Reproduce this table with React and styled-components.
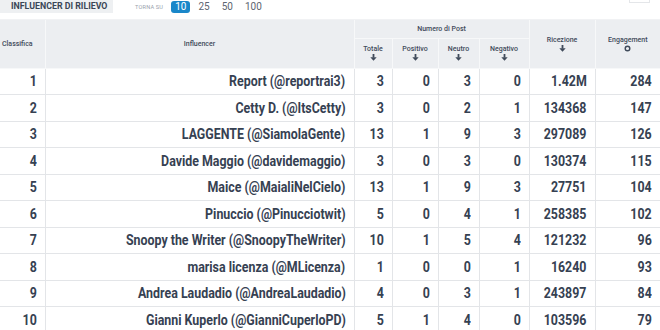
import React from 'react'
import styled, { createGlobalStyle } from 'styled-components'

const rows = [
  [1, 'Report (@reportrai3)', 3, 0, 3, 0, '1.42M', 284],
  [2, 'Cetty D. (@ItsCetty)', 3, 0, 2, 1, '134368', 147],
  [3, 'LAGGENTE (@SiamolaGente)', 13, 1, 9, 3, '297089', 126],
  [4, 'Davide Maggio (@davidemaggio)', 3, 0, 3, 0, '130374', 115],
  [5, 'Maice (@MaialiNelCielo)', 13, 1, 9, 3, '27751', 104],
  [6, 'Pinuccio (@Pinucciotwit)', 5, 0, 4, 1, '258385', 102],
  [7, 'Snoopy the Writer (@SnoopyTheWriter)', 10, 1, 5, 4, '121232', 96],
  [8, 'marisa licenza (@MLicenza)', 1, 0, 0, 1, '16240', 93],
  [9, 'Andrea Laudadio (@AndreaLaudadio)', 4, 0, 3, 1, '243897', 84],
  [10, 'Gianni Kuperlo (@GianniCuperloPD)', 5, 1, 4, 0, '103596', 79],
]

const Global = createGlobalStyle`
  body {
    margin: 0;
    background: #fff;
    font-family: Roboto, "Liberation Sans", sans-serif;
    overflow: hidden;
  }
`

const Arrow = () => (
  <svg width="7" height="7" viewBox="0 0 7 7">
    <rect x="2.6" y="0" width="1.8" height="3.6" fill="#3f4a5a" />
    <path d="M0.3 3.2 L6.7 3.2 L3.5 6.8 Z" fill="#3f4a5a" />
  </svg>
)

const Ring = () => (
  <svg width="7" height="7" viewBox="0 0 7 7">
    <circle cx="3.5" cy="3.5" r="2.3" fill="none" stroke="#3f4a5a" strokeWidth="1.4" />
  </svg>
)

const App = () => {
  return (
    <Page>
      <Global />
      <TopBar>
        <Title>INFLUENCER DI RILIEVO</Title>
        <Torna>TORNA SU</Torna>
        <Pager>
          <PageBtn $active>10</PageBtn>
          <PageBtn>25</PageBtn>
          <PageBtn>50</PageBtn>
          <PageBtn>100</PageBtn>
        </Pager>
        <Corner />
      </TopBar>
      <Table>
        <colgroup>
          <col style={{ width: 45 }} />
          <col style={{ width: 309 }} />
          <col style={{ width: 38 }} />
          <col style={{ width: 46 }} />
          <col style={{ width: 41 }} />
          <col style={{ width: 50 }} />
          <col style={{ width: 66 }} />
          <col style={{ width: 65 }} />
        </colgroup>
        <thead>
          <HeadRow $h={18}>
            <Th rowSpan={2} $align="left">Classifica</Th>
            <Th rowSpan={2}>Influencer</Th>
            <Th colSpan={4}>Numero di Post</Th>
            <Th rowSpan={2}>
              <Label>Ricezione</Label>
              <Arrow />
            </Th>
            <Th rowSpan={2}>
              <Label>Engagement</Label>
              <Ring />
            </Th>
          </HeadRow>
          <HeadRow $h={30}>
            <Th><Label>Totale</Label><Arrow /></Th>
            <Th><Label>Positivo</Label><Arrow /></Th>
            <Th><Label>Neutro</Label><Arrow /></Th>
            <Th><Label>Negativo</Label><Arrow /></Th>
          </HeadRow>
        </thead>
        <tbody>
          {rows.map((r) => (
            <Row key={r[0]}>
              {r.map((v, i) => (
                <Td key={i}>
                  <Narrow>{v}</Narrow>
                </Td>
              ))}
            </Row>
          ))}
        </tbody>
      </Table>
    </Page>
  )
}

export default App

const Page = styled.div`
  width: 660px;
  height: 330px;
  overflow: hidden;
`

const TopBar = styled.div`
  display: flex;
  align-items: flex-start;
  height: 20px;
  box-sizing: border-box;
  border-bottom: 1px solid #f1f2f4;
`

const Title = styled.div`
  background: #eef0f2;
  color: #3b4656;
  font-weight: 700;
  font-size: 8.8px;
  height: 13px;
  line-height: 13px;
  padding: 0 5px 0 11px;
  width: 97px;
  white-space: nowrap;
`

const Torna = styled.div`
  margin-left: 22px;
  margin-top: 4px;
  font-size: 5.6px;
  color: #9aa2ad;
  letter-spacing: 0.2px;
`

const Pager = styled.div`
  display: flex;
  margin-left: 8px;
`

const PageBtn = styled.div`
  font-size: 10px;
  height: 12px;
  line-height: 12px;
  margin-top: 1px;
  padding: 0 4px;
  margin-right: 4px;
  border-radius: 3px;
  color: ${(p) => (p.$active ? '#fff' : '#5d6570')};
  background: ${(p) => (p.$active ? '#1a87c9' : 'transparent')};
`

const Corner = styled.div`
  margin-left: auto;
  margin-right: 10px;
  width: 19px;
  height: 2px;
  border: 1px solid #e4e6e9;
  border-top: none;
`

const Table = styled.table`
  border-collapse: collapse;
  table-layout: fixed;
  width: 660px;
`

const HeadRow = styled.tr`
  height: ${(p) => p.$h}px;
`

const Th = styled.th`
  background: #eceef1;
  border: 1px solid #f7f8f9;
  border-top: none;
  color: #3f4a5a;
  font-size: 7px;
  font-weight: 500;
  text-align: ${(p) => p.$align || 'center'};
  padding: 0 2px;
  vertical-align: middle;
  line-height: 8px;
  &:first-child {
    border-left: none;
  }
  &:last-child {
    border-right: none;
  }
  svg {
    display: block;
    margin: 1px auto 0;
  }
`

const Label = styled.div``

const Row = styled.tr`
  height: 26.5px;
`

const Td = styled.td`
  border: 1px solid #e3e5e8;
  text-align: right;
  padding: 0 8px 0 0;
  font-family: Roboto, "Liberation Sans", sans-serif;
  font-weight: 700;
  font-size: 15.5px;
  color: #364152;
  white-space: nowrap;
  &:first-child {
    border-left: none;
  }
  &:last-child {
    border-right: none;
  }
`

const Narrow = styled.span`
  display: inline-block;
  transform: scaleX(0.8);
  transform-origin: right center;
`
